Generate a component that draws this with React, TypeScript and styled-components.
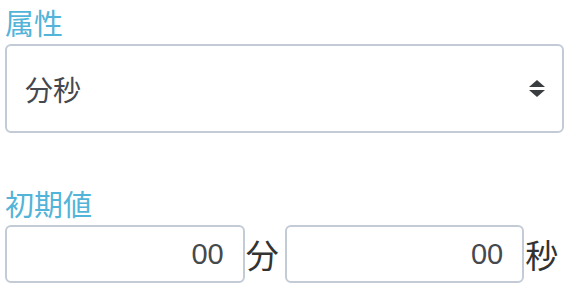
import React from 'react';
import styled, { createGlobalStyle } from 'styled-components';

const GlobalStyle = createGlobalStyle`
  html, body {
    margin: 0;
    padding: 0;
    background: #ffffff;
  }
  body {
    font-family: "Noto Sans CJK JP", "Noto Sans", sans-serif;
  }
`;

const Form = styled.div`
  width: 559px;
  padding: 0 0 0 5px;
  display: flex;
  flex-direction: column;
`;

const Field = styled.div<{ $gap?: number }>`
  display: flex;
  flex-direction: column;
  margin-top: ${(p) => p.$gap ?? 0}px;
`;

const Label = styled.label`
  font-size: 29px;
  line-height: 44px;
  height: 44px;
  color: #52b4d8;
`;

const SelectBox = styled.div`
  position: relative;
  box-sizing: border-box;
  height: 89px;
  border: 2px solid #c2cbd6;
  border-radius: 6px;
  display: flex;
  align-items: center;
  padding: 0 18px;
  font-size: 28px;
  color: #45494e;
`;

const Arrows = styled.svg`
  position: absolute;
  right: 17px;
  top: 50%;
  transform: translateY(-50%);
`;

const Row = styled.div`
  display: flex;
  align-items: center;
  height: 58px;
`;

const NumberBox = styled.div`
  box-sizing: border-box;
  width: 241px;
  height: 58px;
  border: 2px solid #c2cbd6;
  border-radius: 6px;
  display: flex;
  align-items: center;
  justify-content: flex-end;
  padding: 0 19px;
  font-family: "Liberation Sans", "Noto Sans CJK JP", sans-serif;
  font-size: 29px;
  color: #45494e;
`;

const Unit = styled.span`
  width: 40px;
  box-sizing: border-box;
  padding-left: 1px;
  font-size: 33px;
  line-height: 1;
  color: #333333;
`;

export default function App() {
  return (
    <>
      <GlobalStyle />
      <Form>
        <Field>
          <Label>属性</Label>
          <SelectBox>
            分秒
            <Arrows width="16" height="18" viewBox="0 0 16 18">
              <path d="M8 0 L16 7 L0 7 Z" fill="#3a3d40" />
              <path d="M0 10 L16 10 L8 17 Z" fill="#3a3d40" />
            </Arrows>
          </SelectBox>
        </Field>
        <Field $gap={48}>
          <Label>初期値</Label>
          <Row>
            <NumberBox>00</NumberBox>
            <Unit>分</Unit>
            <NumberBox>00</NumberBox>
            <Unit>秒</Unit>
          </Row>
        </Field>
      </Form>
    </>
  );
}
